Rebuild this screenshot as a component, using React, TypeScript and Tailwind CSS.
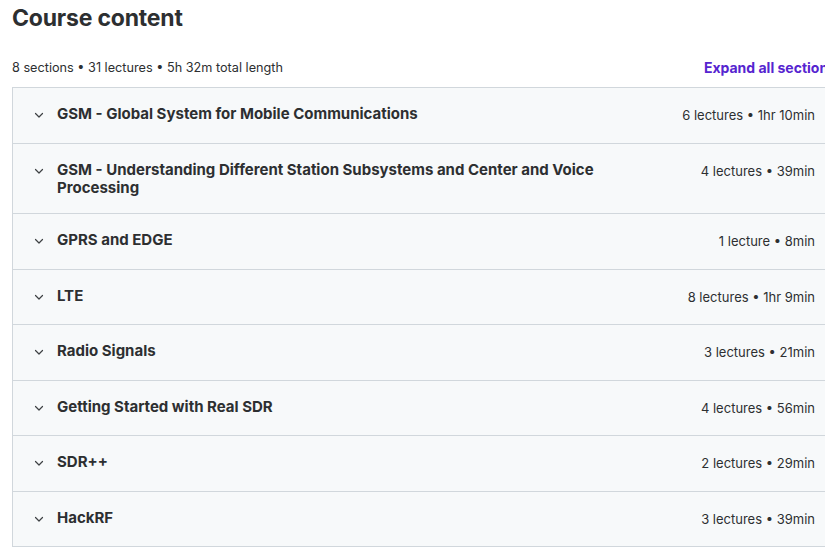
import React from "react";

const sections = [
  { title: "GSM - Global System for Mobile Communications", meta: "6 lectures • 1hr 10min" },
  { title: "GSM - Understanding Different Station Subsystems and Center and Voice Processing", meta: "4 lectures • 39min" },
  { title: "GPRS and EDGE", meta: "1 lecture • 8min" },
  { title: "LTE", meta: "8 lectures • 1hr 9min" },
  { title: "Radio Signals", meta: "3 lectures • 21min" },
  { title: "Getting Started with Real SDR", meta: "4 lectures • 56min" },
  { title: "SDR++", meta: "2 lectures • 29min" },
  { title: "HackRF", meta: "3 lectures • 39min" },
];

function Chevron() {
  return (
    <svg width="10" height="10" viewBox="0 0 10 10" className="shrink-0 text-[#3e4143]">
      <path d="M1.5 3.5 L5 7 L8.5 3.5" fill="none" stroke="currentColor" strokeWidth="1.2" strokeLinecap="round" strokeLinejoin="round" />
    </svg>
  );
}

export default function App() {
  return (
    <div className="w-[825px] h-[547px] overflow-hidden bg-white font-['Inter',sans-serif] text-[#2d2f31]">
      <div className="w-[828px] ml-3">
        <h2 className="text-[23px] font-bold leading-[34px] pt-[1px] tracking-[-0.2px]">Course content</h2>
        <div className="flex items-end justify-between mt-[24px] mb-[10px]">
          <span className="text-[12.7px] leading-[18px]">8 sections • 31 lectures • 5h 32m total length</span>
          <button className="text-[14px] font-bold text-[#5624d0] leading-[18px] mr-[4px]">Expand all sections</button>
        </div>
        <div className="border border-[#d1d7dc]">
          {sections.map((s, i) => (
            <div
              key={i}
              className={`flex items-start justify-between gap-6 bg-[#f7f9fa] pl-[21px] pr-6 pt-[17px] pb-[16.55px] ${i > 0 ? "border-t border-[#d1d7dc]" : ""}`}
            >
              <div className="flex gap-[13px] min-h-[21px] items-start">
                <div className="pt-[5px]">
                  <Chevron />
                </div>
                <span className="text-[15px] font-bold leading-[18px] max-w-[560px]">{s.title}</span>
              </div>
              <span className="text-[13px] leading-[19px] whitespace-nowrap pt-[1px]">{s.meta}</span>
            </div>
          ))}
        </div>
      </div>
    </div>
  );
}
